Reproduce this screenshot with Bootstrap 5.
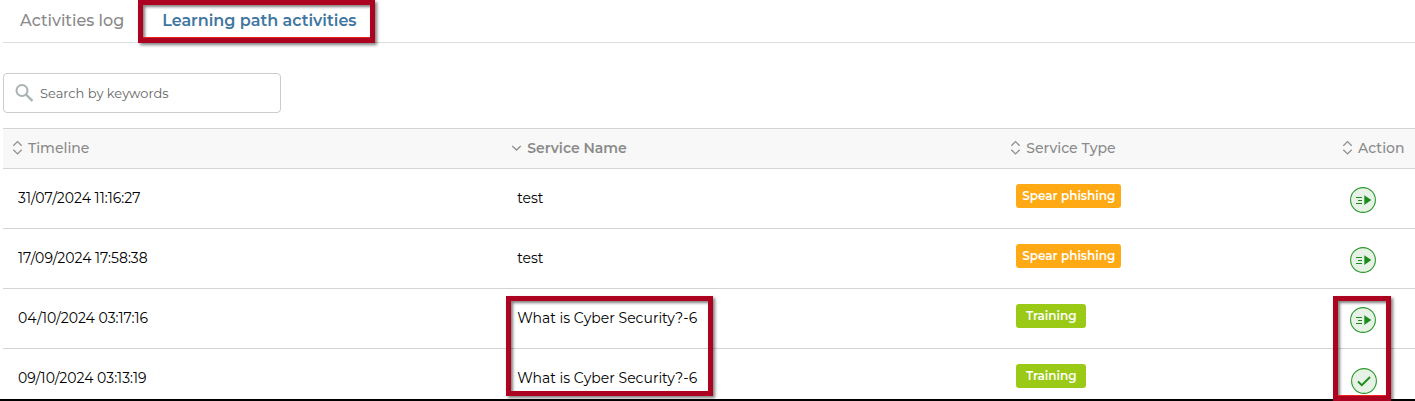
<!DOCTYPE html>
<html lang="en">
<head>
<meta charset="utf-8">
<meta name="viewport" content="width=device-width, initial-scale=1">
<title>Learning path activities</title>
<link rel="stylesheet" href="https://cdn.jsdelivr.net/npm/bootstrap@5.3.0/dist/css/bootstrap.min.css">
<style>
  body { font-family: Montserrat, Inter, sans-serif; font-size: 14px; line-height: 20px; color: #000; }
  .viewport { padding-left: 3px; }
  .viewport::after { content: ""; position: fixed; inset: auto 0 0 0; height: 2px; background: #000; }
  .activity-tabs { height: 43px; border-bottom: 1px solid #ddd; font-size: 16px; }
  .activity-tabs .nav-link { padding: 11px 14px 10px 17px; color: #8a8a8a; font-weight: 500; }
  .activity-tabs .nav-link.active { font-weight: 600; color: #4076a0; padding: 11px 18px 10px 24px; }
  .callout-box { position: absolute; border: 5px solid #ac0320; z-index: 2; pointer-events: none;
    box-shadow: 2px 2px 3px rgba(0,0,0,.5), inset 2px 2px 3px rgba(0,0,0,.5); }
  .callout-line::after { content: ""; position: absolute; inset: auto 0 0 0; height: 1px; background: #f02020; }
  .callout-tab { inset: 0 0 -1px 0; }
  .callout-name { left: 4px; top: 7px; width: 207px; height: 100px; }
  .callout-action { left: 0; top: 7px; width: 58px; height: 105px; }
  .search-box { width: 278px; height: 40px; margin-top: 30px; border: 1px solid #ccc; border-radius: 4px; padding-left: 11px; }
  .search-box input { font-size: 13px; padding: 2px 6px 0; box-shadow: none !important; }
  .search-box input::placeholder { color: #666; }
  .log-table { margin-top: 15px; table-layout: fixed; border-collapse: separate; border-spacing: 0; }
  .log-table th { height: 41px; padding: 0 0 2px 9px; background: #f8f8f8; border-top: 1px solid #d4d4d4; border-bottom: 1px solid #d4d4d4; vertical-align: middle; font-weight: 500; }
  .log-table th.sorted { font-weight: 600; }
  .sort-button { border: 0; background: none; padding: 0; color: #8a8a8a; gap: 5px; font-weight: inherit; }
  .log-table td { position: relative; height: 60px; padding: 19px 0 0 15px; border-bottom: 1px solid #d4d4d4; vertical-align: top; color: #000; }
  .log-table td.type-cell { padding-top: 15px; }
  .log-table td.action-cell { padding: 18px 0 0 17px; }
  .type-badge { display: block; height: 24px; line-height: 24px; padding: 0; border-radius: 3px; font-size: 12px; font-weight: 600; color: #fff; }
  .type-phishing { width: 105px; background: #ffa914; }
  .type-training { width: 70px; background: #9ac916; }
  .round-action { display: block; border: 0; padding: 0; background: none; width: 26px; height: 26px; }
  .round-action svg { display: block; }
  .round-done { margin: 1px 0 0 1px; }
  .col-wide { width: 35.35%; }
  .col-type { width: 23.5%; }
</style>
<script src="https://cdn.jsdelivr.net/npm/bootstrap@5.3.0/dist/js/bootstrap.bundle.min.js"></script>
</head>
<body>
<svg class="d-none" aria-hidden="true">
  <symbol id="sort" viewBox="0 0 11 16"><path d="M1.300 5.700 5.500 1.600l4.200 4.100M1.300 9.800l4.200 4.100 4.200-4.100" fill="none" stroke="#8f8f8f" stroke-width="1.300"/></symbol>
  <symbol id="sort-down" viewBox="0 0 11 16"><path d="M1.200 6l4.300 4 4.300-4" fill="none" stroke="#8f8f8f" stroke-width="1.300"/></symbol>
  <symbol id="run" viewBox="0 0 26 26"><circle cx="13" cy="13" r="12.400" fill="#e6f2e6" stroke="#2c982c" stroke-width="1.100"/><path d="M6 10.500h6M8 13.500h4M6 16.500h6" stroke="#1b8c1b" stroke-width="1.100"/><path d="M14.300 8.300 21.300 13l-7 5z" fill="#1b8c1b"/></symbol>
  <symbol id="done" viewBox="0 0 26 26"><circle cx="13" cy="13" r="12.400" fill="#e6f2e6" stroke="#2c982c" stroke-width="1.100"/><path d="M7 13.500l3.800 3.700L19 9" fill="none" stroke="#1b8c1b" stroke-width="1.900"/></symbol>
</svg>
<main class="viewport vh-100 overflow-hidden">
  <nav class="activity-tabs nav flex-nowrap" aria-label="Activities">
    <a class="nav-link" href="#log">Activities log</a>
    <div class="position-relative">
      <a class="nav-link active" href="#path" aria-current="page">Learning path activities</a>
      <span class="callout-box callout-line callout-tab"></span>
    </div>
  </nav>
  <label class="search-box d-flex align-items-center">
    <svg width="19" height="20" viewBox="0 0 19 20" class="flex-shrink-0" aria-hidden="true"><circle cx="7" cy="7.500" r="5.500" fill="none" stroke="#a9b2b2" stroke-width="2"/><path d="M11 11.500l6.500 6.500" stroke="#a9b2b2" stroke-width="2.400"/></svg>
    <input class="form-control border-0 bg-transparent" type="text" placeholder="Search by keywords" aria-label="Search by keywords">
  </label>
  <table class="log-table w-100">
    <colgroup><col class="col-wide"><col class="col-wide"><col class="col-type"><col></colgroup>
    <thead>
      <tr>
        <th scope="col"><button class="sort-button d-flex align-items-center"><svg width="11" height="16"><use href="#sort"/></svg>Timeline</button></th>
        <th scope="col" class="sorted"><button class="sort-button d-flex align-items-center"><svg width="11" height="16"><use href="#sort-down"/></svg>Service Name</button></th>
        <th scope="col"><button class="sort-button d-flex align-items-center"><svg width="11" height="16"><use href="#sort"/></svg>Service Type</button></th>
        <th scope="col"><button class="sort-button d-flex align-items-center"><svg width="11" height="16"><use href="#sort"/></svg>Action</button></th>
      </tr>
    </thead>
    <tbody>
      <tr>
        <td>31/07/2024 11:16:27</td><td>test</td>
        <td class="type-cell"><span class="badge type-badge type-phishing">Spear phishing</span></td>
        <td class="action-cell"><button class="round-action" aria-label="Run"><svg width="26" height="26"><use href="#run"/></svg></button></td>
      </tr>
      <tr>
        <td>17/09/2024 17:58:38</td><td>test</td>
        <td class="type-cell"><span class="badge type-badge type-phishing">Spear phishing</span></td>
        <td class="action-cell"><button class="round-action" aria-label="Run"><svg width="26" height="26"><use href="#run"/></svg></button></td>
      </tr>
      <tr>
        <td>04/10/2024 03:17:16</td><td>What is Cyber Security?-6<span class="callout-box callout-name"></span></td>
        <td class="type-cell"><span class="badge type-badge type-training">Training</span></td>
        <td class="action-cell"><button class="round-action" aria-label="Run"><svg width="26" height="26"><use href="#run"/></svg></button><span class="callout-box callout-line callout-action"></span></td>
      </tr>
      <tr>
        <td>09/10/2024 03:13:19</td><td>What is Cyber Security?-6</td>
        <td class="type-cell"><span class="badge type-badge type-training">Training</span></td>
        <td class="action-cell"><button class="round-action round-done" aria-label="Completed"><svg width="26" height="26"><use href="#done"/></svg></button></td>
      </tr>
    </tbody>
  </table>
</main>
</body>
</html>
